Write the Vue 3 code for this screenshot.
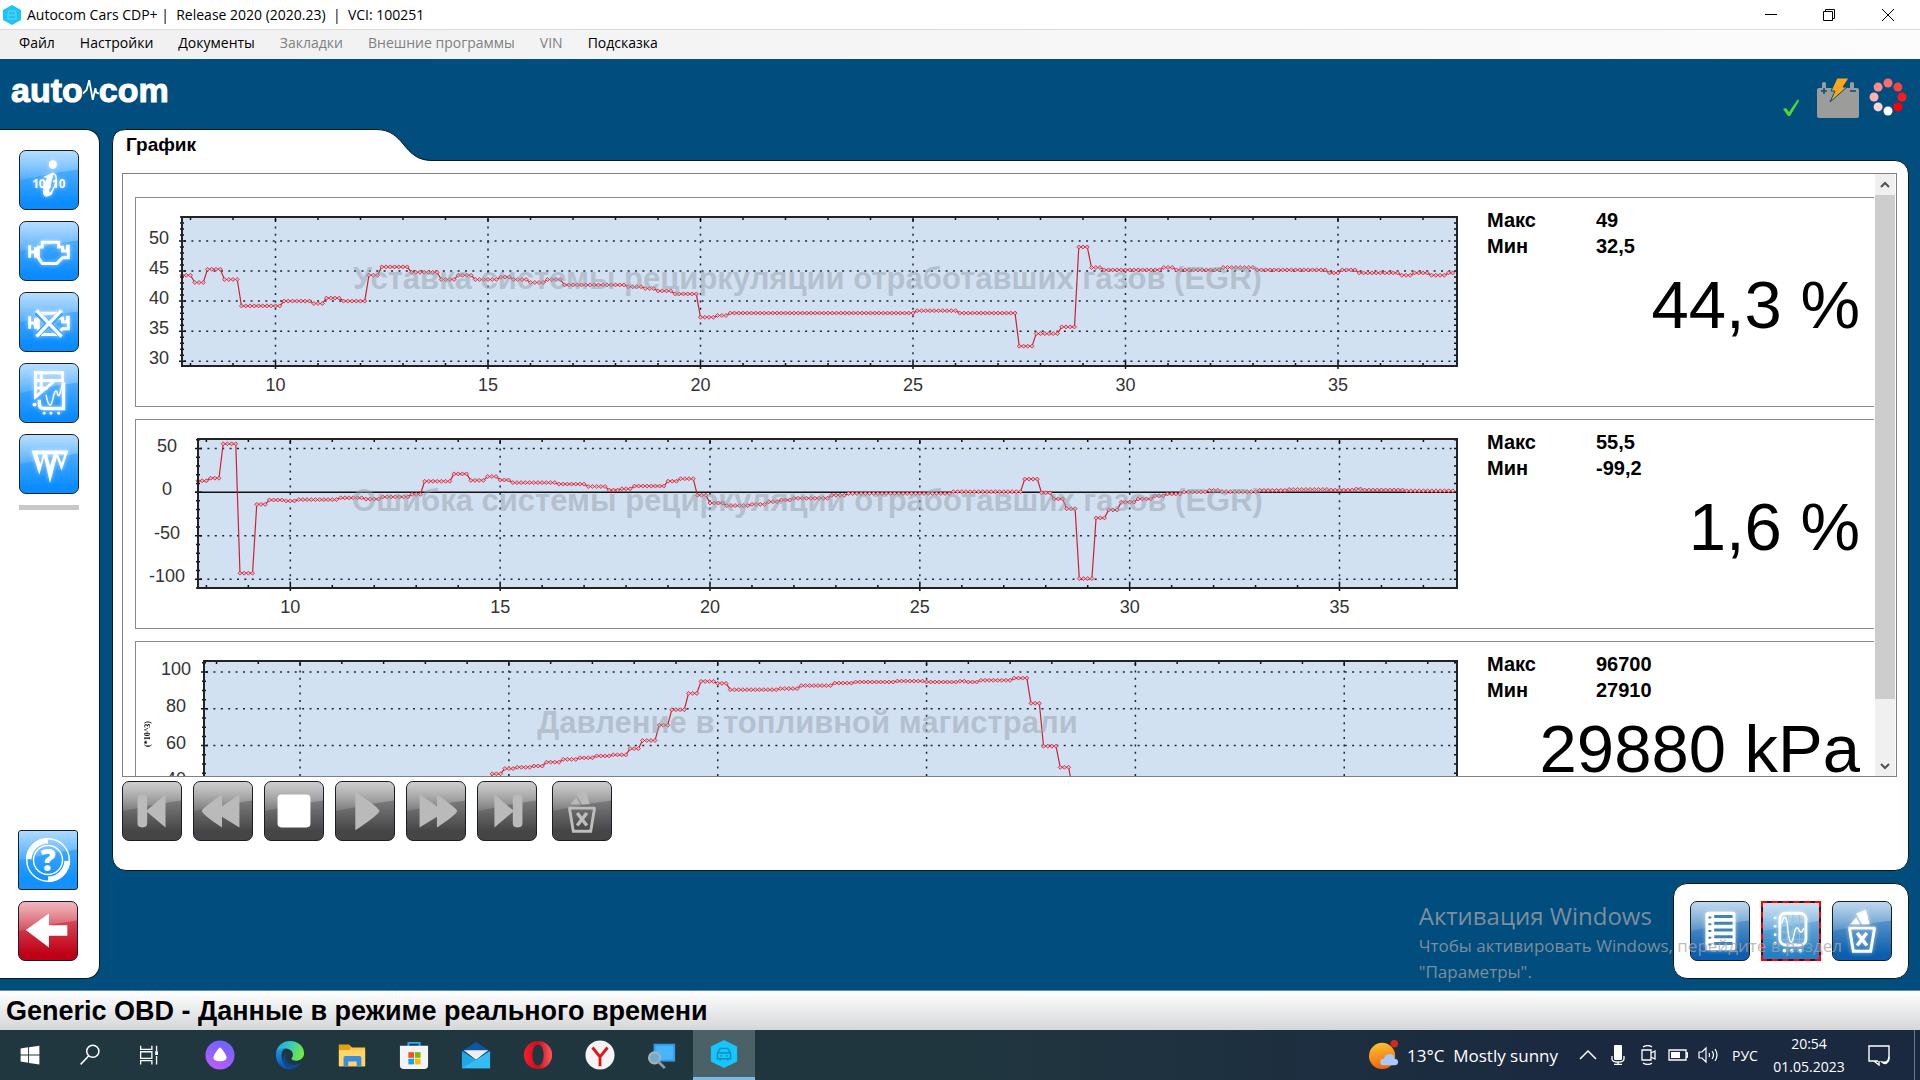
<template>
  <div class="app">
    <!-- Window title -->
    <header class="titlebar">
      <svg class="app-icon" viewBox="0 0 18 20"><path d="M9 0l9 5v10l-9 5-9-5V5z" fill="#1fc3f7" /><path d="M5 9l1-3h6l1 3v5H5zM6 10h6" fill="none" stroke="#5ad8ff" stroke-width="1.2" /></svg>
      <h1>Autocom Cars CDP+ |&nbsp; Release 2020 (2020.23)&nbsp; |&nbsp; VCI: 100251</h1>
      <div class="window-buttons">
        <button aria-label="Свернуть"><svg viewBox="0 0 12 12"><path d="M0 5.5h12" /></svg></button>
        <button aria-label="Восстановить"><svg viewBox="0 0 12 12"><path d="M.5 2.5h9v9h-9zM2.500 2.500v-2h9v9h-2" /></svg></button>
        <button aria-label="Закрыть"><svg viewBox="0 0 12 12"><path d="M0 0l12 12M12 0L0 12" /></svg></button>
      </div>
    </header>

    <nav class="menu">
      <button v-for="item in menu" :key="item.label" :disabled="item.disabled">{{ item.label }}</button>
    </nav>

    <div class="brand-row">
      <div class="logo" aria-label="autocom">
        <span>auto</span>
        <svg viewBox="0 0 18 28"><path d="M0 18l4-4 3-11 4 22 3-13 1 5 3 1" /></svg>
        <span>com</span>
      </div>
      <div class="indicators">
        <svg class="check" viewBox="0 0 18 18"><path d="M1 10l3-1 3 4L16 0l1 2L8 17H6z" fill="#4bdc32" /></svg>
        <svg class="battery" viewBox="0 0 42 42">
          <path d="M2 11h3V6q2-2 4 0v5h24V6q2-2 4 0v5h3q2 0 2 2v26q0 2-2 2H2q-2 0-2-2V13q0-2 2-2z" fill="#9c9c9b" />
          <path d="M4 14h6M7 11v6M33 14h6" stroke="#014d7e" stroke-width="1.500" />
          <path d="M20 1h12l-6 9h4L13 25l5-11h-4z" fill="#fba61c" stroke="#014d7e" />
        </svg>
        <svg class="spinner" viewBox="0 0 38 38">
          <circle v-for="(dot, i) in spinner" :key="i" :cx="dot.x" :cy="dot.y" r="4.500" :fill="dot.color" />
        </svg>
      </div>
    </div>

    <div class="workspace">
      <aside class="sidebar">
        <button v-for="name in tools" :key="name" class="tile blue" :aria-label="name">
          <svg viewBox="0 0 60 60" v-html="icons[name]"></svg>
        </button>
        <hr>
        <div class="sidebar-bottom">
          <button class="tile help" aria-label="help"><svg viewBox="0 0 60 60" v-html="icons.help"></svg></button>
          <button class="tile red" aria-label="back"><svg viewBox="0 0 60 60" v-html="icons.back"></svg></button>
        </div>
      </aside>

      <main class="main">
        <div class="tab">
          <svg viewBox="0 0 320 32"><path d="M.5 33V14Q.5.500 14 .5H264C294 .5 290 31.500 320 31.500V33" /></svg>
          <h2>График</h2>
        </div>
        <section class="panel">
          <div class="viewport">
            <div class="cards">
              <article v-for="chart in charts" :key="chart.title" class="card">
                <div class="chart">
                  <p class="chart-title">{{ chart.title }}</p>
                  <div class="plot-row">
                    <div class="y-axis" :style="{ width: chart.axis + 'px', paddingLeft: chart.unit ? '12px' : 0 }">
                      <span v-if="chart.unit" class="unit">{{ chart.unit }}</span>
                      <div class="y-labels">
                        <span v-for="v in chart.yLabels" :key="v" :style="{ top: chart.y(v) + 'px' }">{{ v }}</span>
                      </div>
                    </div>
                    <svg class="plot" :viewBox="`0 0 ${chart.width} ${plotHeight}`" preserveAspectRatio="none">
                      <path class="grid" :d="chart.gridH" />
                      <path class="grid" :d="chart.gridV" />
                      <path class="ticks" :d="chart.ticks" />
                      <path v-if="chart.zero" class="zero" :d="chart.zero" />
                      <path class="line" :d="chart.line" />
                      <path class="markers" :d="chart.markers" />
                      <rect class="frame" x="0" y="0" :width="chart.width" :height="plotHeight" />
                    </svg>
                  </div>
                  <div class="x-axis" :style="{ marginLeft: chart.axis + 'px' }">
                    <span v-for="t in xLabels" :key="t" :style="{ left: (t - chart.start) / span * 100 + '%' }">{{ t }}</span>
                  </div>
                </div>
                <div class="stats">
                  <dl>
                    <dt>Макс</dt><dd>{{ chart.max }}</dd>
                    <dt>Мин</dt><dd>{{ chart.min }}</dd>
                  </dl>
                  <p class="current">{{ chart.current }}</p>
                </div>
              </article>
            </div>
            <div class="scrollbar">
              <button aria-label="Вверх"><svg viewBox="0 0 10 8"><path d="M1 6l4-4 4 4" /></svg></button>
              <div class="track"><div class="thumb"></div></div>
              <button aria-label="Вниз"><svg viewBox="0 0 10 8"><path d="M1 2l4 4 4-4" /></svg></button>
            </div>
          </div>
          <div class="controls">
            <button v-for="name in controls" :key="name" class="tile gray" :class="name" :aria-label="name">
              <svg viewBox="0 0 60 60" v-html="icons[name]"></svg>
            </button>
          </div>
        </section>

        <div class="bottom-row">
          <div class="view-buttons">
            <button class="tile navy" aria-label="list"><svg viewBox="0 0 60 60" v-html="icons.list"></svg></button>
            <button class="tile navy selected" aria-label="graph"><svg viewBox="0 0 60 60" v-html="icons.graph"></svg></button>
            <button class="tile navy" aria-label="clear"><svg viewBox="0 0 60 60" v-html="icons.trash"></svg></button>
          </div>
          <div class="activation">
            <p class="activation-title">Активация Windows</p>
            <p>Чтобы активировать Windows, перейдите в раздел<br>"Параметры".</p>
          </div>
        </div>
      </main>
    </div>

    <div class="status">Generic OBD - Данные в режиме реального времени</div>

    <footer class="taskbar">
      <button v-for="name in taskbar" :key="name" :class="['task', name]" :aria-label="name">
        <svg viewBox="0 0 32 32" v-html="taskIcons[name]"></svg>
      </button>
      <div class="tray">
        <button class="weather">
          <svg viewBox="0 0 32 32" v-html="taskIcons.weather"></svg>
          <span>13°C&nbsp; Mostly sunny</span>
        </button>
        <button v-for="name in tray" :key="name" class="tray-icon" :aria-label="name">
          <svg viewBox="0 0 20 20" v-html="taskIcons[name]"></svg>
        </button>
        <button class="lang">РУС</button>
        <button class="clock"><span>20:54</span><span>01.05.2023</span></button>
        <button class="notify" aria-label="Уведомления"><svg viewBox="0 0 22 22" v-html="taskIcons.notify"></svg></button>
      </div>
      <button class="show-desktop" aria-label="Свернуть все окна"></button>
    </footer>
  </div>
</template>

<script setup>
const menu = [
  { label: 'Файл' },
  { label: 'Настройки' },
  { label: 'Документы' },
  { label: 'Закладки', disabled: true },
  { label: 'Внешние программы', disabled: true },
  { label: 'VIN', disabled: true },
  { label: 'Подсказка' },
]

const tools = ['info', 'engine', 'engineOff', 'listGraph', 'icicles']
const controls = ['first', 'rewind', 'stop', 'play', 'forward', 'last', 'trash']
const taskbar = ['start', 'search', 'taskview', 'alice', 'edge', 'explorer', 'store', 'mail', 'opera', 'yandex', 'remote', 'autocom']
const tray = ['chevron', 'mic', 'camera', 'power', 'sound']

// Loading ring, clockwise from the top
const spinner = ['#ff6b6b', '#ff4040', '#ff1a1a', '#ff0000', '#ffffff', '#ffd5d9', '#ffb0b4', '#ff8a8c'].map((color, i) => {
  const a = (i * Math.PI) / 4
  return { x: 19 + 14 * Math.sin(a), y: 19 - 14 * Math.cos(a), color }
})

// Charts: every series is a list of [start second, value] steps sampled each 0.1 s
const span = 30
const plotHeight = 149
const xLabels = [10, 15, 20, 25, 30, 35]

const egrTarget = [
  [7.8, 44.3], [8.1, 43.1], [8.4, 45.3], [8.8, 43.6], [9.2, 39.2], [10.2, 40], [10.9, 39.6], [11.2, 40.5],
  [11.6, 40], [12.2, 44.3], [12.5, 45.7], [13.2, 44.8], [13.9, 43.6], [14.3, 44.3], [14.7, 43.6], [15.3, 44],
  [15.6, 43.6], [16, 43.1], [16.4, 43.6], [16.8, 42.7], [18.3, 42.4], [18.7, 42.1], [19, 41.7], [19.4, 41.2],
  [20, 37.3], [20.4, 37.6], [20.7, 38], [25.1, 38.4], [26.1, 38], [27.5, 32.5], [27.9, 34.6], [28.5, 35.7],
  [28.9, 49], [29.2, 45.6], [29.5, 45.2], [30.9, 45.6], [31.2, 45.2], [32.3, 45.6], [33.1, 45.2], [34.8, 44.7],
  [35.1, 45.2], [35.5, 44.7], [36.5, 44.3], [36.8, 44.7], [37.2, 44.3], [37.6, 44.7],
]

const egrError = [
  [7.8, 13], [8.1, 16], [8.4, 55.5], [8.8, -93], [9.2, -14], [9.5, -9], [9.9, -10], [10.2, -8.500],
  [11.2, -6.500], [11.8, -8], [12.2, -5.500], [12.9, -2.500], [13.2, 12.5], [13.9, 21], [14.3, 13.5], [14.7, 18],
  [15, 14], [15.3, 11], [16.4, 9.2], [17.1, 6.5], [17.6, 2.3], [17.9, 3.8], [18.2, 7], [19, 12.6], [19.3, 15.4],
  [19.7, -3.500], [20, -12.500], [20.4, -15.400], [21, -14], [21.4, -11], [21.7, -9], [22, -7], [22.9, -3.500],
  [23.3, -1.500], [25.8, 0.5], [27.5, 15], [27.9, -0.800], [28.2, -7.700], [28.5, -19], [28.8, -99.200], [29.2, -29.600],
  [29.5, -20.400], [29.8, -11.500], [30.2, -7.700], [30.6, -4.200], [30.9, -2], [31.3, 0.3], [31.9, 2], [32.2, 0.5],
  [33.1, 2], [33.8, 3], [34.8, 2.3], [35.4, 3.6], [35.6, 2.5], [36.6, 1.6],
]

const fuelPressure = [
  [7.8, 30], [13, 38], [14.6, 44.7], [14.9, 47.5], [15.2, 48.2], [15.6, 48.9], [15.9, 51], [16.3, 52.5],
  [16.7, 53.4], [17.1, 54.4], [17.5, 55], [17.9, 58.4], [18.2, 62.8], [18.6, 71.1], [18.9, 79.5], [19.3, 88.4],
  [19.6, 94.9], [20, 93.8], [20.3, 90.4], [21.5, 91], [22, 92.6], [22.8, 94], [23.3, 94.6], [24.3, 95.1],
  [25, 94.6], [25.8, 95], [26, 94.6], [26.3, 95.5], [27.1, 96.7], [27.5, 83], [27.8, 59.7], [28.2, 48.2],
  [28.5, 36], [29, 29.9],
]

const sample = (steps, start) => {
  const out = []
  const first = Math.round(start * 10)
  let k = 0
  for (let n = first; n < first + span * 10; n++) {
    const t = n / 10
    while (k < steps.length - 1 && steps[k + 1][0] <= t) k++
    out.push([t, steps[k][1]])
  }
  return out
}

const buildChart = (c) => {
  const width = 1322 - c.axis
  const x = (t) => ((t - c.start) / span) * width
  const y = (v) => ((c.top - v) / (c.top - c.bottom)) * plotHeight
  const points = sample(c.steps, c.start).map(([t, v]) => [x(t).toFixed(1), y(v).toFixed(1)])
  let ticks = ''
  for (let t = 8; t <= 37; t++) {
    const major = t % 5 === 0
    ticks += `M${x(t)} 0v${major ? 5 : 3}M${x(t)} ${plotHeight + (major ? 3 : 1)}v${major ? -8 : -4}`
  }
  for (let v = Math.ceil(c.bottom / c.minor) * c.minor; v <= c.top; v += c.minor) {
    const major = c.yLabels.includes(v)
    ticks += `M${major ? -3 : -2} ${y(v)}h${major ? 7 : 4}M${width} ${y(v)}h-3`
  }
  return {
    ...c,
    width,
    y,
    ticks,
    gridH: c.yLabels.filter((v) => v !== 0).map((v) => `M2 ${y(v)}H${width}`).join(''),
    gridV: xLabels.map((t) => `M${x(t)} 2V${plotHeight}`).join(''),
    zero: c.bottom < 0 ? `M-3 ${y(0)}H${width}` : '',
    line: 'M' + points.map((p) => p.join(' ')).join('L'),
    markers: points.map(([px, py]) => `M${px - 2} ${py}l2-2 2 2-2 2z`).join(''),
  }
}

const charts = [
  {
    title: 'Уставка системы рециркуляции отработавших газов (EGR)',
    steps: egrTarget, start: 7.8, axis: 46, top: 54, bottom: 29.2, minor: 1, yLabels: [50, 45, 40, 35, 30],
    max: '49', min: '32,5', current: '44,3 %',
  },
  {
    title: 'Ошибка системы рециркуляции отработавших газов (EGR)',
    steps: egrError, start: 7.8, axis: 62, top: 61, bottom: -110, minor: 10, yLabels: [50, 0, -50, -100],
    max: '55,5', min: '-99,2', current: '1,6 %',
  },
  {
    title: 'Давление в топливной магистрали',
    steps: fuelPressure, start: 7.7, axis: 68, top: 106, bottom: 25, minor: 5, yLabels: [100, 80, 60, 40], unit: '(*10^3)',
    max: '96700', min: '27910', current: '29880 kPa',
  },
].map(buildChart)

const engineBody = '<path d="M10 24v13M10 31h6M16 26v11M16 31h3M19 26h4v-5h17v5h4v4h5v-5h1v12h-6l-6 6H23l-4-6z" />'
const bin = '<path d="M16 27h28M17 27l4 24h18l4-24" fill="none" stroke-width="3"/><path d="M25 32l10 13M35 32L25 45" stroke-width="3.500"/><path class="solid" d="M18 23l6-7 4 7zM24 12l10-4 4 15h-8z"/>'

const icons = {
  info: '<ellipse class="solid" cx="34" cy="14" rx="4" ry="4.500"/><path class="solid" d="M24 27l11-5-5 19q0 3 4 1l-1 3q-9 5-8-3l3-14z"/><ellipse cx="31" cy="35" rx="5" ry="12" transform="rotate(22 31 35)" stroke-width="1.500"/><text x="30" y="38" text-anchor="middle" font-family="Open Sans, sans-serif" font-size="12" font-weight="bold" stroke="none" fill="#fff">10110</text>',
  engine: engineBody,
  engineOff: engineBody + '<path d="M17 20l26 24M43 20L17 44" stroke="#3ca5ff" stroke-width="6"/><path d="M17 18l26 27M43 18L17 45" stroke-width="3.500"/>',
  listGraph: '<path d="M16 9h28v8H16zM16 17v17l5-4 14-12M17 25h12M22 9v20" stroke-width="3"/><path d="M45 19v27H25q-5 0-5-5v-4" stroke-width="3.500"/><path d="M27 32c2 12 5 14 7 4s4-10 5-4c2 3 3-4 5-12" stroke-width="1.500"/><circle class="solid" cx="15" cy="42" r="2"/><circle class="solid" cx="25" cy="51" r="1.500"/><circle class="solid" cx="32" cy="51" r="1.500"/><circle class="solid" cx="40" cy="51" r="1.500"/>',
  icicles: '<path class="solid" fill-rule="evenodd" d="M12 16h38l-7 21-5-14-7 27-6-27-5 18zM18 20l3 10 3-10zM28 20l3 12 4-12zM39 20l4 9 3-9z"/>',
  help: '<circle cx="30" cy="30" r="22" stroke-width="1.500"/><path d="M10 29A20 20 0 0 1 30 10M50 31A20 20 0 0 1 30 50" stroke-width="6"/><circle cx="30" cy="30" r="15" stroke-width="1.500"/><text x="30" y="41" text-anchor="middle" font-family="Open Sans, sans-serif" font-size="31" font-weight="800" stroke="none" fill="#fff">?</text>',
  back: '<path class="solid" d="M7 29L31 12v12h19v11H31v12z"/>',
  first: '<path class="solid" d="M15 17q0-4 5-4t5 4v12l19-16v34L25 31v12q0 4-5 4t-5-4z"/>',
  rewind: '<path class="solid" d="M8 30q1-3 21-17v12l18-12v34L29 36v11Q9 34 8 30z"/>',
  stop: '<rect class="solid" x="13" y="13" width="34" height="34" rx="4"/>',
  play: '<path class="solid" d="M20 10q24 16 25 20-1 4-25 20z"/>',
  forward: '<path class="solid" d="M52 30q-1-3-21-17v12L13 13v34l18-11v11q20-13 21-17z"/>',
  last: '<path class="solid" d="M46 17q0-4-5-4t-5 4v12L17 13v34l19-16v12q0 4 5 4t5-4z"/>',
  trash: bin,
  list: '<rect class="solid" x="15" y="10" width="31" height="40" rx="3"/><path d="M24 15h19M24 22h19M24 29h19M24 36h19M24 43h19" stroke="#3f83bd" stroke-width="3"/><path d="M18 16h3M18 23h3M18 30h3M18 37h3M18 44h3" stroke="#3f83bd" stroke-width="2"/>',
  graph: '<path d="M20 22h24M20 31h24M20 39h24M26 12v32M32 12v32M39 12v32" stroke="#8ebfe4" stroke-width="1"/><rect x="18" y="11" width="28" height="34" rx="6" stroke-width="3"/><path d="M20 22c2-9 5-9 6 0 2 24 5 26 8 8 2-6 4-3 5 0 2 3 3 0 5-3" stroke-width="1.500"/><g class="solid"><circle cx="13" cy="16" r="1.500"/><circle cx="13" cy="25" r="1.500"/><circle cx="13" cy="34" r="1.500"/><circle cx="13" cy="43" r="1.500"/><circle cx="23" cy="51" r="2"/><circle cx="31" cy="51" r="2"/><circle cx="40" cy="51" r="2"/></g>',
}

const taskIcons = {
  start: '<path d="M6 9l8-1.200V15.500H6zM15 7.600L26 6v9.500H15zM6 16.500h8v7.700L6 23zM15 16.500h11V26l-11-1.600z" fill="#fff"/>',
  search: '<g fill="none" stroke="#fff" stroke-width="1.600"><circle cx="19" cy="12" r="6.500"/><path d="M14.500 17L6 26"/></g>',
  taskview: '<g fill="none" stroke="#fff" stroke-width="1.400"><path d="M6 6v4h12V6M6 26v-4h12v4M6 12.500h12v7H6zM23 6v6M23 17v9"/></g><path d="M21.500 12h3v4h-3z" fill="#fff"/>',
  alice: '<defs><linearGradient id="al" x1="0.700" y1="0" x2="0.300" y2="1"><stop offset="0" stop-color="#6a63ff"/><stop offset="1" stop-color="#bd5cff"/></linearGradient></defs><circle cx="16" cy="16" r="15.500" fill="url(#al)"/><path d="M16 8c2 1 7 8 7 11 0 5-14 5-14 0 0-3 5-10 7-11z" fill="#fff"/>',
  edge: '<defs><linearGradient id="ed1" x1="0" y1="0" x2="1" y2="0.300"><stop offset="0" stop-color="#249fe0"/><stop offset="0.500" stop-color="#31c8c7"/><stop offset="1" stop-color="#6fe843"/></linearGradient><linearGradient id="ed2" x1="0" y1="0" x2="0" y2="1"><stop offset="0" stop-color="#1a9de2"/><stop offset="1" stop-color="#0b4fae"/></linearGradient></defs><path d="M1 15C2 6 8 1 16 1c9 0 15 6 15 13 0 6-5 8-9 8-3 0-5-1-4-3 3-4 0-10-7-10C6 9 2 12 1 15z" fill="url(#ed1)"/><path d="M1 16c0-5 5-8 10-7-4 2-4 5-4 8 0 7 5 13 12 14C9 33 1 26 1 16z" fill="url(#ed2)"/><path d="M11 15c-2 9 8 15 17 9-3 5-7 7-11 7C8 29 5 19 11 15z" fill="#10478e"/>',
  explorer: '<path d="M2 5h11l3 3H30v20H2z" fill="#ffc83e"/><path d="M2 5h11l2 3-2 3H2z" fill="#e2a012"/><path d="M2 11h28v17H2z" fill="#ffd667"/><path d="M7 28V19q0-2 2-2h15q2 0 2 2v9h-5v-5h-9v5z" fill="#3b8de0"/>',
  store: '<path d="M10 8V3h12v5" fill="none" stroke="#2caef0" stroke-width="2"/><path d="M1 6h30v21q0 4-4 4H5q-4 0-4-4z" fill="#f4f4f4"/><path d="M10 13h6v6h-6z" fill="#f25022"/><path d="M17 13h6v6h-6z" fill="#7fba00"/><path d="M10 20h6v6h-6z" fill="#00a4ef"/><path d="M17 20h6v6h-6z" fill="#ffb900"/>',
  mail: '<path d="M1 12L16 2l15 10v3H1z" fill="#0a57a5"/><path d="M3 11h26L16 21z" fill="#eee"/><path d="M1 12l15 9L31 12v18H1z" fill="#1fa7e8"/><path d="M1 30L31 12v18z" fill="#35bdf3"/>',
  opera: '<defs><linearGradient id="op" x1="0" y1="0" x2="1" y2="0"><stop offset="0" stop-color="#ff1b2d"/><stop offset="0.500" stop-color="#c4101c"/><stop offset="1" stop-color="#ff5a5f"/></linearGradient></defs><path fill-rule="evenodd" d="M16 1a15 15 0 1 0 0 30 15 15 0 0 0 0-30zM16 5c4 0 6 5 6 11s-2 11-6 11-6-5-6-11 2-11 6-11z" fill="url(#op)"/>',
  yandex: '<circle cx="16" cy="16" r="15.500" fill="#f5f5f5"/><path d="M8 8l8 10 8-10M16 18v10" fill="none" stroke="#e51414" stroke-width="3"/>',
  remote: '<path d="M7 4h23v19H7z" fill="#2e9ceb"/><path d="M9 6h19v15H9z" fill="#49b5ff"/><circle cx="8" cy="19" r="6" fill="#7aa9c6" stroke="#a3b6c3" stroke-width="2"/><path d="M12 23l7 7" stroke="#8e9ba4" stroke-width="3"/>',
  autocom: '<path d="M16 1l14 7v16l-14 7-14-7V8z" fill="#18c5fb"/><path d="M9 15l3-5h8l3 5v6H9zM9 15h14M12 21v2M20 21v2M12 18h2M18 18h2" fill="none" stroke="#078dc0" stroke-width="1.500"/>',
  weather: '<defs><linearGradient id="sun" x1="0.300" y1="0" x2="0.500" y2="1"><stop offset="0" stop-color="#fac432"/><stop offset="1" stop-color="#f0620e"/></linearGradient></defs><circle cx="14" cy="17" r="14" fill="url(#sun)"/><circle cx="27" cy="4" r="4" fill="#d32a20"/><path d="M15 27q-3 0-3-3.500t4-3.500q1-5 6-5t5 5q4 0 4 3.500t-4 3.500z" fill="#a9c9fa"/>',
  chevron: '<path d="M2 14l8-8 8 8" fill="none" stroke="#fff" stroke-width="1.500"/>',
  mic: '<rect x="6" y="0" width="8" height="15" rx="1" fill="#fff"/><path d="M4 11v3q0 3 6 3t6-3v-3M10 17v3M6 19.500h8" fill="none" stroke="#fff" stroke-width="1.300"/>',
  camera: '<path d="M4 5h9v10H4zM13 8l4-2v8l-4-2M5 2q5-3 9 0M5 18q5 3 9 0" fill="none" stroke="#fff" stroke-width="1.300"/>',
  power: '<path d="M1 5h17v10H1zM18 8h1.500v4H18" fill="none" stroke="#fff" stroke-width="1.300"/><path d="M3 7h9v6H3z" fill="#fff"/>',
  sound: '<path d="M1 7h3l4-4v14l-4-4H1zM11 8q1 2 0 4M14 6q3 4 0 8M17 4q4 6 0 12" fill="none" stroke="#fff" stroke-width="1.200"/>',
  notify: '<path d="M10 17H1V2h20v11M6 17l5 4v-4M21 12c0 5-3 7-7 6 3 3 8 1 7-6z" fill="none" stroke="#fff" stroke-width="1.400"/>',
}
</script>

<style>
body {
  background: #014d7e;
}
</style>

<style scoped>
* {
  box-sizing: border-box;
}
.app {
  display: flex;
  flex-direction: column;
  height: 100vh;
  min-width: 1100px;
  overflow: hidden;
  background: #014d7e;
  font-family: "Liberation Sans", Arial, sans-serif;
  color: #000;
}
h1, h2, p, dl, dd {
  margin: 0;
}
button {
  padding: 0;
  border: 0;
  background: none;
  font: inherit;
  color: inherit;
}
svg {
  display: block;
  flex: none;
}

/* Title and menu */
.titlebar {
  display: flex;
  align-items: center;
  height: 29px;
  padding: 0 2px 0 3px;
  background: #fff;
}
.app-icon {
  width: 18px;
  height: 20px;
  margin-right: 6px;
}
h1 {
  flex: 1;
  font: 400 14px/20px "Open Sans", "Noto Sans", sans-serif;
}
.window-buttons {
  display: flex;
}
.window-buttons button {
  display: grid;
  place-items: center;
  width: 58px;
  height: 28px;
}
.window-buttons button:last-child {
  width: 60px;
}
.window-buttons svg {
  width: 12px;
  height: 12px;
  fill: none;
  stroke: #000;
}
.menu {
  display: flex;
  gap: 25px;
  height: 30px;
  padding-left: 19px;
  border-top: 1px solid #dcdcdc;
  background: linear-gradient(90deg, #f0f0f0, #fcfcfc);
  font: 400 14px/26px "Open Sans", "Noto Sans", sans-serif;
}
.menu button {
  height: 26px;
}
.menu button:disabled {
  color: #808080;
}

/* Brand row */
.brand-row {
  display: flex;
  justify-content: space-between;
  height: 70px;
  padding: 12px 13px 0 11px;
}
.logo {
  display: flex;
  align-items: center;
  height: 38px;
  color: #fff;
  font: 700 34px/34px "Liberation Sans", Arial, sans-serif;
  -webkit-text-stroke: 1px #fff;
}
.logo svg {
  width: 16px;
  height: 28px;
  fill: none;
  stroke: #fff;
  stroke-width: 2;
}
.indicators {
  display: flex;
  align-items: flex-start;
  padding-top: 6px;
}
.check {
  width: 18px;
  height: 18px;
  margin: 22px 17px 0 0;
}
.battery {
  width: 42px;
  height: 42px;
  margin-right: 10px;
}
.spinner {
  width: 38px;
  height: 38px;
  margin-top: 1px;
}

/* Work area */
.workspace {
  display: flex;
  flex: 1;
  gap: 12px;
  min-height: 0;
  padding: 0 11px 11px 0;
}
.sidebar {
  display: flex;
  flex-direction: column;
  align-items: center;
  gap: 11px;
  width: 100px;
  padding: 20px 1px 17px 0;
  border: 1px solid #10181e;
  border-left: 0;
  border-radius: 0 14px 14px 0;
  background: #fff;
}
.sidebar hr {
  width: 60px;
  height: 5px;
  margin: 0;
  border: 0;
  background: #c8c8c8;
}
.sidebar-bottom {
  display: flex;
  flex-direction: column;
  gap: 11px;
  margin-top: auto;
  margin-right: 2px;
}
.tile {
  position: relative;
  flex: none;
  width: 60px;
  height: 60px;
  border: 1px solid #16202a;
  border-radius: 7px;
  overflow: hidden;
}
.tile::before {
  content: "";
  position: absolute;
  inset: 0;
  background: linear-gradient(rgba(255, 255, 255, 0.5), rgba(255, 255, 255, 0.12) 50%);
  clip-path: polygon(0 0, 100% 0, 100% 32%, 60% 38%, 0 50%);
}
.tile svg {
  position: relative;
  width: 58px;
  height: 58px;
  fill: none;
  stroke: #fff;
  stroke-width: 3;
  filter: drop-shadow(0 0 2px rgba(255, 255, 255, 0.6));
}
.tile :deep(.solid) {
  fill: #fff;
  stroke: none;
}
.blue {
  background: linear-gradient(#6dbcff, #0a8cff 90%);
}
.help {
  border-radius: 3px;
  background: linear-gradient(#5ab4ff, #1493ff 80%);
}
.help svg,
.red svg {
  filter: none;
}
.red {
  background: linear-gradient(#e0707c, #c00014 90%);
}
.gray {
  background: linear-gradient(#9c9c9c, #454545 85%);
}
.gray svg {
  stroke: #bdbdbd;
  filter: none;
}
.gray :deep(.solid) {
  fill: #bababa;
}
.stop :deep(.solid) {
  fill: #fff;
}
.navy {
  background: linear-gradient(#7fb0da, #0c5fae 90%);
}
.selected {
  border: 2px dashed #f00;
  border-radius: 0;
  background: linear-gradient(#93c4e6, #2280c6 90%) padding-box, linear-gradient(#5a0a10, #5a0a10) border-box;
}
.selected svg {
  width: 56px;
  height: 56px;
}

.main {
  display: flex;
  flex: 1;
  flex-direction: column;
  min-width: 0;
}
.tab {
  position: relative;
  z-index: 1;
  width: 320px;
  height: 32px;
  margin-bottom: -1px;
}
.tab svg {
  position: absolute;
  width: 320px;
  height: 32px;
  fill: #fff;
  stroke: #10181e;
}
.tab h2 {
  position: relative;
  padding: 6px 0 0 14px;
  font-size: 19px;
  line-height: 20px;
}
.panel {
  display: flex;
  flex: 1;
  flex-direction: column;
  gap: 4px;
  min-height: 0;
  padding: 12px 11px 29px 9px;
  border: 1px solid #10181e;
  border-radius: 0 14px 14px 14px;
  background: #fff;
}
.viewport {
  display: flex;
  flex: 1;
  min-height: 0;
  overflow: hidden;
  border: 1px solid #808080;
}
.cards {
  display: flex;
  flex: 1;
  flex-direction: column;
  gap: 12px;
  min-width: 0;
  padding: 23px 0 0 12px;
  overflow: hidden auto;
  scrollbar-width: none;
}
.card {
  display: flex;
  flex: none;
  height: 210px;
  border: 1px solid #8a8a8a;
  border-right: 0;
}
.chart {
  position: relative;
  flex: 1;
  min-width: 0;
  padding: 19px 22px 0 0;
}
.chart-title {
  position: absolute;
  z-index: 1;
  inset: 64px 0 auto 0;
  color: rgba(150, 160, 170, 0.5);
  font-size: 31px;
  font-weight: 700;
  line-height: 34px;
  text-align: center;
  white-space: nowrap;
}
.plot-row {
  display: flex;
}
.y-axis {
  position: relative;
  flex: none;
}
.y-labels {
  position: relative;
  height: 100%;
}
.y-labels span {
  position: absolute;
  right: 0;
  left: 0;
  margin-top: -13px;
  color: #333;
  font-size: 18px;
  line-height: 20px;
  text-align: center;
}
.unit {
  position: absolute;
  top: 60px;
  left: 8px;
  font: 700 8px/8px "Liberation Serif", serif;
  writing-mode: vertical-rl;
  transform: rotate(180deg);
}
.plot {
  flex: 1;
  min-width: 0;
  height: 149px;
  overflow: visible;
  background: #d2e1f2;
  fill: none;
}
.frame {
  stroke: #222;
  stroke-width: 2;
}
.grid {
  stroke: #223;
  stroke-width: 1.5;
  stroke-dasharray: 2 5.4;
}
.ticks {
  stroke: #111;
  stroke-width: 1.5;
}
.zero {
  stroke: #111;
  stroke-width: 1.5;
}
.line {
  stroke: #cb2233;
  stroke-width: 1.2;
}
.markers {
  fill: #e9b4be;
  stroke: #cb2233;
  stroke-width: 0.8;
}
.x-axis {
  position: relative;
  height: 38px;
}
.x-axis span {
  position: absolute;
  top: 9px;
  width: 40px;
  margin-left: -20px;
  color: #333;
  font-size: 18px;
  line-height: 20px;
  text-align: center;
}
.stats {
  flex: none;
  width: 395px;
  padding: 9px 14px 0 8px;
}
.stats dl {
  display: grid;
  grid-template-columns: 109px 1fr;
  font-size: 20px;
  font-weight: 700;
  line-height: 26px;
}
.current {
  margin-top: 12px;
  font-size: 67px;
  line-height: 67px;
  text-align: right;
  white-space: nowrap;
}
.scrollbar {
  display: flex;
  flex: none;
  flex-direction: column;
  width: 20px;
  margin: 0 1px;
  background: #f0f0f0;
}
.scrollbar button {
  display: grid;
  place-items: center;
  height: 21px;
}
.scrollbar svg {
  width: 10px;
  height: 8px;
  fill: none;
  stroke: #505050;
  stroke-width: 2;
}
.track {
  flex: 1;
}
.thumb {
  height: 90%;
  background: #cdcdcd;
}
.controls {
  display: flex;
  gap: 11px;
}
.controls .trash {
  margin-left: 4px;
}

/* Bottom buttons */
.bottom-row {
  position: relative;
  display: flex;
  justify-content: flex-end;
  padding-top: 12px;
}
.view-buttons {
  display: flex;
  gap: 11px;
  padding: 17px 16px;
  border: 1px solid #10181e;
  border-radius: 14px;
  background: #fff;
}
.activation {
  position: absolute;
  top: 28px;
  right: 67px;
  color: rgba(165, 165, 165, 0.75);
  font: 400 17px/26px "Open Sans", "Noto Sans", sans-serif;
  white-space: nowrap;
  pointer-events: none;
}
.activation-title {
  font-size: 24px;
  line-height: 34px;
}

.status {
  height: 40px;
  padding-left: 6px;
  border-top: 1px solid #5f8fae;
  background: linear-gradient(#fff, #d4d6d8);
  font-size: 27px;
  font-weight: 700;
  line-height: 40px;
}

/* Taskbar */
.taskbar {
  display: flex;
  align-items: center;
  height: 50px;
  background: linear-gradient(90deg, #213740, #20363f 50%, #1a2840 85%);
  color: #fff;
  font-family: "Open Sans", "Noto Sans", sans-serif;
}
.task {
  display: grid;
  place-items: center;
  width: 62px;
  height: 50px;
}
.task svg {
  width: 30px;
  height: 30px;
}
.start, .search, .taskview {
  width: 60px;
}
.alice {
  width: 79px;
}
.autocom {
  border-bottom: 3px solid #76b9ed;
  background: #4b6168;
}
.tray {
  display: flex;
  align-items: center;
  height: 50px;
  margin-left: auto;
  padding-right: 24px;
}
.weather {
  display: flex;
  align-items: center;
  gap: 8px;
  margin-right: 15px;
  font-size: 17px;
}
.weather svg {
  width: 30px;
  height: 30px;
}
.tray-icon {
  display: grid;
  place-items: center;
  width: 30px;
}
.tray-icon svg {
  width: 20px;
  height: 20px;
}
.lang {
  width: 44px;
  font-size: 14px;
}
.clock {
  display: flex;
  flex-direction: column;
  align-items: center;
  width: 84px;
  font-size: 14px;
  line-height: 23px;
}
.notify {
  margin-left: 17px;
}
.notify svg {
  width: 22px;
  height: 22px;
}
.show-desktop {
  width: 6px;
  height: 50px;
  border-left: 1px solid #6f7a8a;
}
</style>
